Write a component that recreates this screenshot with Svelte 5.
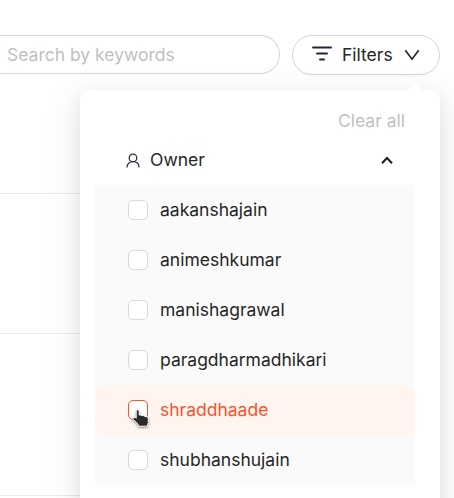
<script>
  const owners = ['aakanshajain', 'animeshkumar', 'manishagrawal', 'paragdharmadhikari', 'shraddhaade', 'shubhanshujain'];
  const hovered = 'shraddhaade';
</script>

<main>
  <header>
    <div class="search">Search by keywords</div>
    <button class="filters">
      <svg class="lines" width="20" height="16" viewBox="0 0 20 16"><path d="M1 2.5H19M5 8.5H15M8 14.5H12" /></svg>
      <span>Filters</span>
      <svg class="down" width="16" height="12" viewBox="0 0 16 12"><path d="M1.3 1.2 8 10.2 14.7 1.2" /></svg>
    </button>
  </header>
  <div class="list">
    <div class="entry first"></div>
    <div class="entry"></div>
    <div class="entry last"></div>
  </div>

  <section class="panel">
    <i class="arrow"></i>
    <div class="clear">Clear all</div>
    <div class="heading">
      <svg class="user" width="14" height="15" viewBox="0 0 14 15"><circle cx="7" cy="4.9" r="3.8" /><path d="M1 14.4C1 10.8 3.5 8.7 7 8.7s6 2.1 6 5.7" /></svg>
      <span>Owner</span>
      <svg class="up" width="12" height="8" viewBox="0 0 12 8"><path d="M1 7.2 6 2 11 7.2" /></svg>
    </div>
    <ul>
      {#each owners as owner}
        <li class:hover={owner === hovered}>
          <span class="box"></span>
          <span>{owner}</span>
          {#if owner === hovered}
            <svg class="pointer" width="18" height="22" viewBox="0 0 18 22"><path d="M4.2 2.6Q5.7.8 7.2 2.6V7.2Q8.8 6.4 10 7.7 11.8 7 13 8.4 16.4 8.2 16.3 10.8V14.5L15.3 18.2H6.2V16.4L1 11.2Q.6 8.9 3 9.2L4.2 10.2Z" /></svg>
          {/if}
        </li>
      {/each}
    </ul>
  </section>
</main>

<style>
  :global(body) { margin: 0; }
  main {
    position: relative;
    box-sizing: border-box;
    width: 454px;
    height: 498px;
    overflow: hidden;
    padding-top: 35px;
    background: #fff;
    color: #262626;
    font: 17.5px/28px Inter, sans-serif;
  }
  svg { display: block; fill: none; overflow: visible; }
  header { display: flex; align-items: flex-start; }
  .search {
    box-sizing: border-box;
    width: 280px;
    height: 39px;
    padding: 5px 0 0 7px;
    border: 1px solid #d5d6d6;
    border-left: 0;
    border-radius: 0 20px 20px 0;
    color: #bfbfbf;
  }
  .filters {
    display: flex;
    box-sizing: border-box;
    width: 148px;
    height: 40px;
    margin-left: 12px;
    padding: 0 0 1px 19px;
    border: 1px solid #d5d6d6;
    border-radius: 20px;
    align-items: center;
    background: #fff;
    box-shadow: 0 2px 0 rgba(0, 0, 0, .02);
    color: inherit;
    font: inherit;
  }
  .lines { margin: -3px 10px 0 0; stroke: #232735; stroke-width: 2; stroke-linecap: round; }
  .down { margin-left: 11px; stroke: #262626; stroke-width: 1.7; }
  .list { width: 440px; padding-top: 20px; }
  .entry { box-sizing: border-box; height: 140px; border-bottom: 1px solid #ebebeb; }
  .first { height: 99px; }
  .last { height: 162px; }
  .panel {
    position: absolute;
    left: 80px;
    top: 90px;
    box-sizing: border-box;
    width: 360px;
    height: 560px;
    padding: 17px 25px 0 15px;
    border-radius: 10px;
    background: #fff;
    box-shadow: 0 7.5px 20px rgba(0, 0, 0, .08), 0 3.75px 7.5px -5px rgba(0, 0, 0, .12), 0 11px 35px 10px rgba(0, 0, 0, .05);
  }
  .arrow {
    position: absolute;
    top: -7px;
    right: 16px;
    width: 18px;
    height: 8px;
    background: #fff;
    clip-path: path('M0 8Q2 7 4 5L7 1.5Q9-.5 11 1.5L14 5Q16 7 18 8Z');
  }
  .clear { padding-right: 10px; color: #bfbfbf; text-align: right; }
  .heading { display: flex; height: 50px; padding: 0 22px 0 30.5px; align-items: center; }
  .user { margin-right: 10.5px; stroke: #303441; stroke-width: 1.3; }
  .up { margin-left: auto; stroke: #1f1f1f; stroke-width: 2.1; }
  ul { margin: 0; padding: 0; list-style: none; background: #fafafa; }
  li { position: relative; display: flex; height: 50px; padding-left: 33px; align-items: center; gap: 12px; border-radius: 10px; }
  .box { box-sizing: border-box; width: 20px; height: 20px; border: 1px solid #d9d9d9; border-radius: 5px; background: #fff; }
  .hover { background: #fff5ee; color: #f5532d; }
  .hover .box { border-color: #f5532d; }
  .pointer { position: absolute; left: 37px; top: 23px; fill: #292929; stroke: #fff; stroke-width: 1; filter: drop-shadow(0 1px 1px rgba(0, 0, 0, .45)); }
</style>
